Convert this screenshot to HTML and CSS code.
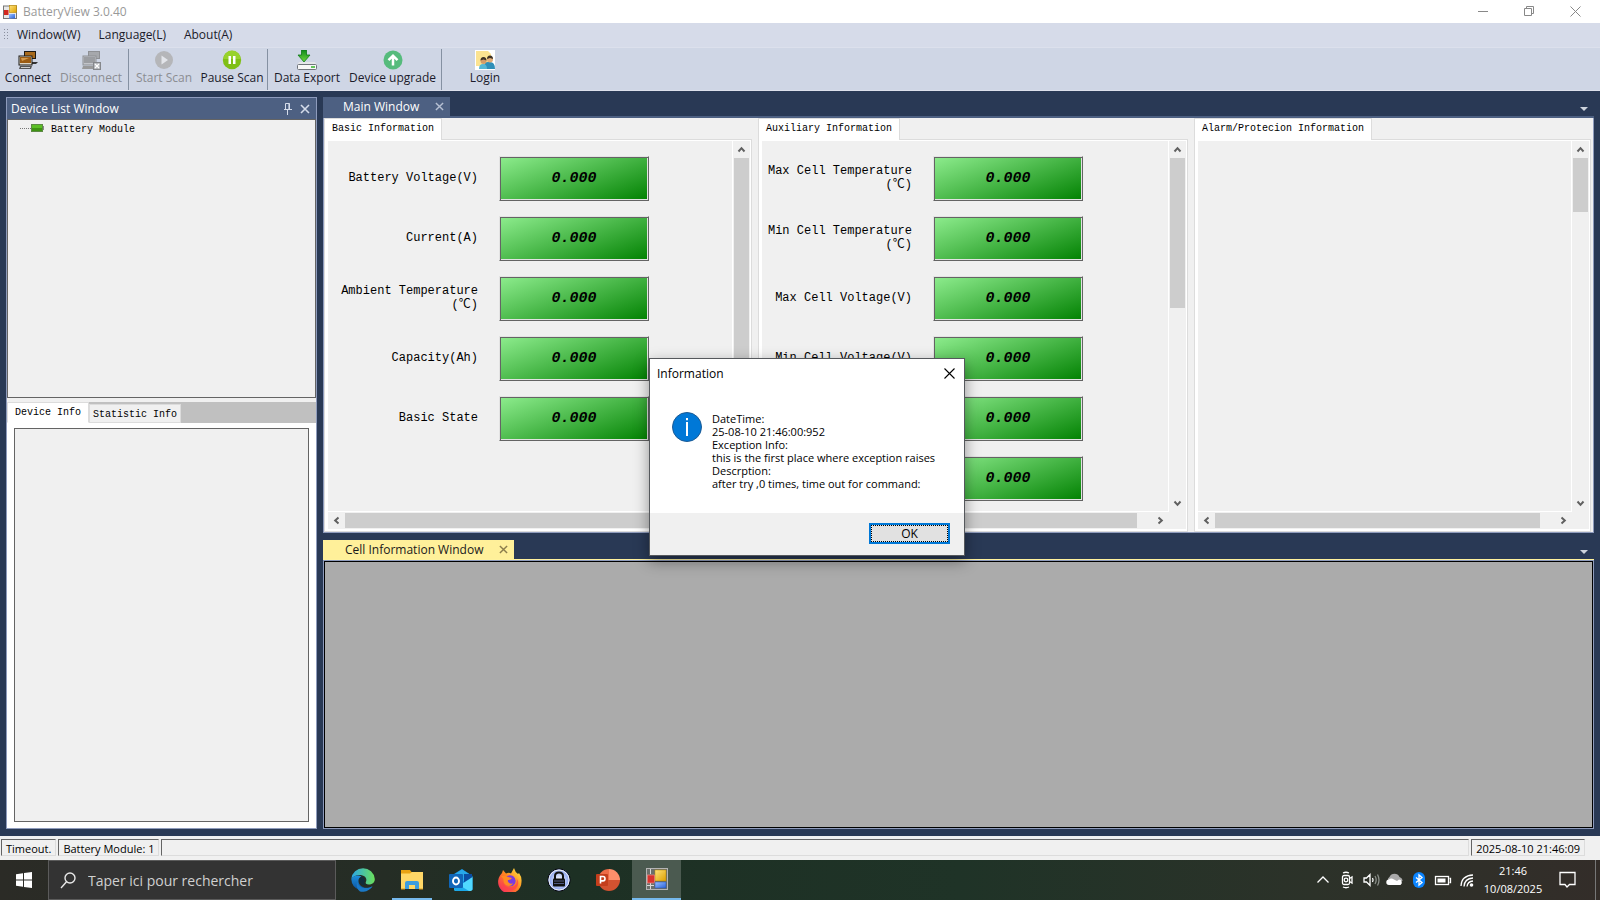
FILE: index.html
```html
<!DOCTYPE html>
<html lang="en">
<head>
  <meta charset="UTF-8" />
  <meta name="viewport" content="width=device-width, initial-scale=1.0" />
  <title>BatteryView 3.0.40</title>
  <link rel="stylesheet" href="styles.css">
</head>
<body>
  <!-- shared icon shapes -->
  <svg width="0" height="0" class="defs" aria-hidden="true">
    <defs>
      <linearGradient id="gYellow" x1="0" y1="0" x2="1" y2="1"><stop offset="0" stop-color="#ffe27a"/><stop offset="1" stop-color="#dda000"/></linearGradient>
      <linearGradient id="gBlue" x1="0" y1="0" x2="1" y2="1"><stop offset="0" stop-color="#9cc0ff"/><stop offset="1" stop-color="#2a62d8"/></linearGradient>
      <linearGradient id="gEdge" x1="0" y1="0" x2="1" y2="0"><stop offset="0" stop-color="#2aa6e8"/><stop offset="1" stop-color="#6be05a"/></linearGradient>
      <linearGradient id="gEdge2" x1="0" y1="0" x2="0" y2="1"><stop offset="0" stop-color="#1c8fdc"/><stop offset="1" stop-color="#0c4f9c"/></linearGradient>
      <linearGradient id="gFox" x1="1" y1="0" x2="0" y2="1"><stop offset="0" stop-color="#fff04a"/><stop offset="0.45" stop-color="#ff8a1e"/><stop offset="1" stop-color="#f5156c"/></linearGradient>
      <radialGradient id="gLock"><stop offset="0" stop-color="#ffffff"/><stop offset="1" stop-color="#7f9bf0"/></radialGradient>
      <linearGradient id="gDown" x1="0" y1="0" x2="0" y2="1"><stop offset="0" stop-color="#0f8a1c"/><stop offset="1" stop-color="#6fd83c"/></linearGradient>
      <symbol id="app" viewBox="0 0 22 22">
        <rect x="0.5" y="0.5" width="21" height="21" fill="#6b6f6b" stroke="#b4b4b4"/>
        <path d="M4.500 14v7M1 17.500h7M4.500 1v5" stroke="#d8d8d8"/>
        <rect x="9" y="2" width="11" height="11" fill="url(#gYellow)" stroke="#b98700" stroke-width=".5"/>
        <rect x="1.500" y="7" width="7" height="8" fill="#d9332e" stroke="#f08a84" stroke-width=".7"/>
        <rect x="9" y="14" width="11" height="6" fill="url(#gBlue)" stroke="#2450a8" stroke-width=".5"/>
      </symbol>
      <symbol id="up" viewBox="0 0 8 7"><path d="M1 5.500L4 2.200L7 5.500" fill="none" stroke="#606060" stroke-width="2"/></symbol>
      <symbol id="cross" viewBox="0 0 10 10"><path d="M1 1l8 8M9 1l-8 8" fill="none" stroke="currentColor" stroke-width="1.600"/></symbol>
    </defs>
  </svg>

  <header class="titlebar">
    <svg class="titlebar-icon" width="14" height="14" viewBox="0 0 14 14">
      <rect x="0.500" y="1" width="13" height="12.500" fill="#e8e8e8" stroke="#777"/>
      <rect x="1" y="5" width="4.500" height="5" fill="#d2271f"/>
      <rect x="6.500" y="0.500" width="7" height="7" fill="url(#gYellow)" stroke="#b98700" stroke-width=".6"/>
      <rect x="6" y="9" width="6" height="4.500" fill="url(#gBlue)"/>
    </svg>
    <h1>BatteryView 3.0.40</h1>
    <div class="window-buttons">
      <button aria-label="Minimize"><svg width="11" height="11"><path d="M0 5.500h10" stroke="#888"/></svg></button>
      <button aria-label="Restore"><svg width="11" height="11" fill="none" stroke="#888"><path d="M.5 2.500h7v7h-7zM2.500 2.500v-2h7v7h-2"/></svg></button>
      <button aria-label="Close"><svg width="11" height="11" stroke="#888"><path d="M.5.5l10 10M10.500.5l-10 10"/></svg></button>
    </div>
  </header>

  <nav class="menubar">
    <span class="grip"></span>
    <button>Window(W)</button>
    <button>Language(L)</button>
    <button>About(A)</button>
  </nav>

  <div class="toolbar">
    <button class="tool tool-connect">
      <svg width="20" height="20" viewBox="0 0 20 20">
        <rect x="6" y="1" width="12" height="8" fill="#1d1a16"/><rect x="7" y="2" width="10" height="6" fill="#a86a1c"/><path d="M14 12h6l-2 2h-4z" fill="#333"/>
        <rect x="1" y="6" width="13" height="9" fill="#ddd6c6" stroke="#1d1a16"/><rect x="2" y="7" width="11" height="6" fill="#9c5c12"/><path d="M3 8h8l-7 3z" fill="#d4994a"/>
        <path d="M2 16h12l-1 3H1z" fill="#555"/><path d="M3 17.500h9" stroke="#ccc"/>
      </svg>
      Connect
    </button>
    <button class="tool tool-disconnect" disabled>
      <svg width="20" height="20" viewBox="0 0 20 20">
        <rect x="7" y="1" width="12" height="8" fill="#8e9094"/><rect x="8" y="2" width="10" height="6" fill="#a6a8ac"/>
        <rect x="2" y="6" width="13" height="9" fill="#c3c5ca" stroke="#8e9094"/><rect x="3" y="7" width="11" height="6" fill="#9b9da1"/>
        <path d="M2 16h12l-1 3H1z" fill="#999"/><rect x="12.500" y="12.500" width="7" height="7" fill="#b4b6ba" stroke="#85878b"/><path d="M14 14l4 4M18 14l-4 4" stroke="#fff" stroke-width="1.300"/>
      </svg>
      Disconnect
    </button>
    <span class="tool-separator"></span>
    <button class="tool tool-scan" disabled>
      <svg width="20" height="20" viewBox="0 0 20 20"><circle cx="10" cy="10" r="9" fill="#b5b6b9"/><path d="M7.500 5.500v9l6.500-4.500z" fill="#e3e5ea"/></svg>
      Start Scan
    </button>
    <button class="tool tool-scan">
      <svg width="20" height="20" viewBox="0 0 20 20"><circle cx="10" cy="10" r="9.200" fill="#7fbf16"/><path d="M1.500 9a8.500 8.500 0 0 1 17 0z" fill="#98d22c"/><path d="M6.500 6h2.500v8H6.500zM11 6h2.500v8H11z" fill="#fff"/></svg>
      Pause Scan
    </button>
    <span class="tool-separator"></span>
    <button class="tool tool-export">
      <svg width="20" height="20" viewBox="0 0 20 20"><path d="M2 12h16l2 3H0z" fill="#e4e6e9"/><rect x="0.500" y="14.500" width="19" height="5" rx="1" fill="#f7f7f7" stroke="#70757c"/><path d="M14 17h4" stroke="#35b52a" stroke-width="1.500"/><path d="M4.500 0h5v5H13l-6 7-6-7h3.500z" fill="url(#gDown)" stroke="#0c7a18" stroke-width=".8"/></svg>
      Data Export
    </button>
    <button class="tool tool-upgrade">
      <svg width="20" height="20" viewBox="0 0 20 20"><circle cx="10" cy="10" r="9.500" fill="#55bb7c"/><path d="M10 15.500V7M5.500 10.200L10 5.700l4.500 4.500" fill="none" stroke="#fff" stroke-width="2.500"/></svg>
      Device upgrade
    </button>
    <span class="tool-separator"></span>
    <button class="tool tool-login">
      <svg width="20" height="20" viewBox="0 0 20 20"><rect width="20" height="20" fill="#fff"/><path d="M1 1h12l3 3v12H1z" fill="#fbe391"/><path d="M9 17q0-5 4-5h2q5 0 5 7H9z" fill="#2f8fb8"/><path d="M4 19q0-5 4-5t4 5z" fill="#55b7d4"/><circle cx="15" cy="9.500" r="3" fill="#e2ae78"/><path d="M12 9q0-3.500 3-3.500T18 9l-3-1z" fill="#3d3226"/><circle cx="8.500" cy="11" r="3" fill="#d49c68"/><path d="M5.500 10.500Q5.500 7 8.500 7t3 3.500l-3-1z" fill="#3d3226"/></svg>
      Login
    </button>
  </div>

  <main class="workspace">
    <aside class="device-window">
      <div class="device-header">
        <h2>Device List Window</h2>
        <button aria-label="Pin"><svg width="8" height="12" fill="none" stroke="#d5dcea"><path d="M1.500 6.500v-6h4v6M4.900.5v6M0 6.500h8M3.500 7v5"/></svg></button>
        <button aria-label="Close"><svg width="10" height="10"><use href="#cross"/></svg></button>
      </div>
      <div class="device-tree">
        <span class="tree-line"></span>
        <svg width="14" height="8"><rect x="0.500" y="0.500" width="11" height="7" fill="#5cbf26" stroke="#5d8a45"/><path d="M1 5.500h10" stroke="#3f9413" stroke-width="3"/><path d="M12.500 2v4" stroke="#888"/></svg>
        <span>Battery Module</span>
      </div>
      <div class="device-tabs">
        <button class="device-tab active">Device Info</button>
        <button class="device-tab">Statistic Info</button>
      </div>
      <div class="device-page"><div class="device-info"></div></div>
    </aside>

    <div class="documents">
      <section class="document main-document">
        <div class="document-tabs">
          <div class="document-tab"><button>Main Window</button><button class="tab-close" aria-label="Close"><svg width="9" height="9" viewBox="0 0 10 10"><use href="#cross"/></svg></button></div>
          <span class="tab-arrow"></span>
        </div>
        <div class="main-content">
          <div class="group group-basic">
            <div class="group-title"><h3>Basic Information</h3></div>
            <div class="group-body">
              <div class="fields">
                <div class="field"><label for="voltage">Battery Voltage(V)</label><input id="voltage" value="0.000" readonly></div>
                <div class="field"><label for="current">Current(A)</label><input id="current" value="0.000" readonly></div>
                <div class="field"><label for="ambient">Ambient Temperature<br>(℃)</label><input id="ambient" value="0.000" readonly></div>
                <div class="field"><label for="capacity">Capacity(Ah)</label><input id="capacity" value="0.000" readonly></div>
                <div class="field"><label for="state">Basic State</label><input id="state" value="0.000" readonly></div>
              </div>
              <div class="vscroll"><svg class="arrow"><use href="#up"/></svg><span class="thumb thumb-long"></span><svg class="arrow down"><use href="#up"/></svg></div>
              <div class="hscroll"><svg class="arrow left"><use href="#up"/></svg><span class="thumb"></span><svg class="arrow right"><use href="#up"/></svg></div>
            </div>
          </div>
          <div class="group group-auxiliary">
            <div class="group-title"><h3>Auxiliary Information</h3></div>
            <div class="group-body">
              <div class="fields">
                <div class="field"><label for="maxtemp">Max Cell Temperature<br>(℃)</label><input id="maxtemp" value="0.000" readonly></div>
                <div class="field"><label for="mintemp">Min Cell Temperature<br>(℃)</label><input id="mintemp" value="0.000" readonly></div>
                <div class="field"><label for="maxvolt">Max Cell Voltage(V)</label><input id="maxvolt" value="0.000" readonly></div>
                <div class="field"><label for="minvolt">Min Cell Voltage(V)</label><input id="minvolt" value="0.000" readonly></div>
                <div class="field"><label></label><input aria-label="Value" value="0.000" readonly></div>
                <div class="field"><label></label><input aria-label="Value" value="0.000" readonly></div>
              </div>
              <div class="vscroll"><svg class="arrow"><use href="#up"/></svg><span class="thumb thumb-medium"></span><svg class="arrow down"><use href="#up"/></svg></div>
              <div class="hscroll"><svg class="arrow left"><use href="#up"/></svg><span class="thumb"></span><svg class="arrow right"><use href="#up"/></svg></div>
            </div>
          </div>
          <div class="group group-alarm">
            <div class="group-title"><h3>Alarm/Protecion Information</h3></div>
            <div class="group-body">
              <div class="fields"></div>
              <div class="vscroll"><svg class="arrow"><use href="#up"/></svg><span class="thumb thumb-short"></span><svg class="arrow down"><use href="#up"/></svg></div>
              <div class="hscroll"><svg class="arrow left"><use href="#up"/></svg><span class="thumb"></span><svg class="arrow right"><use href="#up"/></svg></div>
            </div>
          </div>
        </div>
      </section>

      <section class="document cell-document">
        <div class="document-tabs">
          <div class="document-tab"><button>Cell Information Window</button><button class="tab-close" aria-label="Close"><svg width="9" height="9" viewBox="0 0 10 10"><use href="#cross"/></svg></button></div>
          <span class="tab-arrow"></span>
        </div>
        <div class="cell-content"></div>
      </section>
    </div>
  </main>

  <footer class="statusbar">
    <span>Timeout.</span>
    <span>Battery Module: 1</span>
    <span class="status-fill"></span>
    <span>2025-08-10 21:46:09</span>
  </footer>

  <div class="taskbar">
    <button class="start" aria-label="Start"><svg width="16" height="16" fill="#fff"><path d="M0 2.200l7-1v6.300H0zM8 1.100L16 0v7.500H8zM0 8.500h7v6.300l-7-1zM8 8.500h8V16l-8-1.100z"/></svg></button>
    <label class="search">
      <svg width="16" height="17" fill="none" stroke="#e8e8e8" stroke-width="1.400"><circle cx="10" cy="6" r="5"/><path d="M6.500 9.800L1 16"/></svg>
      <input type="text" placeholder="Taper ici pour rechercher" aria-label="Search">
    </label>
    <button class="task" aria-label="Edge">
      <svg width="24" height="24" viewBox="0 0 24 24"><path d="M.3 11A11.800 11.800 0 0 1 23.800 11c0 4-3 5.500-6 5.500-2.600 0-3.600-1-3-2.200 1.600-3 0-6.300-4-7C6 6.500 1.800 8.500.3 11z" fill="url(#gEdge)"/><path d="M.3 11C2 7.500 7 6.500 10.500 8.500 7 9.500 6.500 14 9 17c3 3.500 8.500 3.500 12.500 1.200A12 12 0 0 1 .3 11z" fill="url(#gEdge2)"/><path d="M6.200 13c.8 7 8.500 9 15.300 5.200C18 23.500 12 24.500 9 23.400 5.500 21 5 17 6.200 13z" fill="#1b79c6"/><path d="M10.300 8.500c2.700.6 3.700 2.500 3.600 4.500l-.8 1.500c-.4 1.300.8 2.200 3 2.500-3.500 1-6.600-.5-7.400-3-.6-2 .2-4.500 1.600-5.500z" fill="#122c3c"/></svg>
    </button>
    <button class="task open" aria-label="File Explorer">
      <svg width="22" height="20" viewBox="0 0 22 20"><path d="M0 0h9l1.500 2H22v17H0z" fill="#e9a213"/><path d="M0 3.500h9L11 2h11v17H0z" fill="#ffd767"/><path d="M4 19v-6q0-2 2-2h10q2 0 2 2v6h-4v-4H8v4z" fill="#3c9de0"/><path d="M0 19h4M18 19h4" stroke="#d99c1c"/></svg>
    </button>
    <button class="task" aria-label="Outlook">
      <svg width="24" height="22" viewBox="0 0 24 22"><path d="M5 5l8-5 10.500 7v14H5z" fill="#1390df"/><path d="M6 5l7-4.500L20 5v7H6z" fill="#28a8ea"/><path d="M15 5h8v6l-8 4z" fill="#0a4da3"/><path d="M5 20l18.500-12v12q0 2-2 2H7q-2 0-2-2z" fill="#50d9ff"/><path d="M5 13l15 9H7q-2 0-2-2z" fill="#1ba9e9"/><rect y="5" width="14" height="14" rx="1" fill="#1066b8"/><ellipse cx="7" cy="12" rx="3" ry="3.500" fill="none" stroke="#fff" stroke-width="1.900"/></svg>
    </button>
    <button class="task" aria-label="Firefox">
      <svg width="24" height="24" viewBox="0 0 24 24"><path d="M4 5l1-3 3 3.500q3-1.500 5 0L16 0q1 4 4 6l1-1q3 4 2.500 9A11.700 11.700 0 1 1 2 7.500z" fill="url(#gFox)"/><path d="M8 9q3-3 7-1 4 3 2 7.500-2 3.500-6 2.500-5-1.500-4.500-6z" fill="#7a3be0"/><path d="M3 8q4-1 7 1l4 1q-1 2-4 2-1 2 2 3.500 2 .5 3-.5-1 3-4.500 3Q5 17 5.500 11z" fill="#ff8b20"/><path d="M4 14q3 7 10 5 6-2 4.500-9 4 6-1 11-7 4-12-2z" fill="#ff3b52" opacity=".7"/></svg>
    </button>
    <button class="task" aria-label="Password vault">
      <svg width="24" height="24" viewBox="0 0 24 24"><circle cx="12" cy="12" r="11.200" fill="url(#gLock)" stroke="#050505" stroke-width="1"/><circle cx="12" cy="12" r="10" fill="none" stroke="#eee"/><path d="M8 11V8q0-3.500 4-3.500T16 8v3" fill="none" stroke="#111" stroke-width="2"/><rect x="6" y="10.500" width="12" height="8" rx="1" fill="#111"/><path d="M7 13h10M7 15.500h10" stroke="#5d6b9c" stroke-width=".8"/></svg>
    </button>
    <button class="task" aria-label="PowerPoint">
      <svg width="24" height="22" viewBox="0 0 24 22"><path d="M13 0v11H24A11 11 0 0 0 13 0z" fill="#ff8f6b"/><path d="M13 0A11 11 0 0 0 2 11h11z" fill="#ed6c47"/><path d="M2 11h22a11 11 0 0 1-22 0z" fill="#d35230"/><rect y="5" width="12" height="12" rx="1" fill="#c43e1c"/><path d="M4.500 14.500v-7H7q2 0 2 2.200t-2 2.200H4.500" fill="none" stroke="#fff" stroke-width="1.600"/></svg>
    </button>
    <button class="task current" aria-label="BatteryView"><svg width="22" height="22"><use href="#app"/></svg></button>

    <div class="tray">
      <svg width="24" height="24" viewBox="0 0 24 24"><path d="M6.500 14.500l5.500-5.500 5.500 5.500"/></svg>
      <svg width="24" height="24" viewBox="0 0 24 24"><rect x="7.500" y="7.500" width="7" height="9" rx="1.500"/><circle cx="11" cy="12" r="1.800"/><path d="M14.500 10.500l2.500-1.500v6l-2.500-1.500M8 5q3-1.500 6 0M8 19q3 1.500 6 0"/></svg>
      <svg width="24" height="24" viewBox="0 0 24 24"><path d="M5 10h2.500l3.500-3.500v11L7.500 14H5zM13.500 10q1.200 2 0 4"/><path d="M16 8q2.400 4 0 8M18.500 6.500q3 5.500 0 11" stroke="#8b908a"/></svg>
      <svg width="24" height="24" viewBox="0 0 24 24"><path d="M6.500 15a3.500 3.500 0 0 1 0-6 5.500 5.500 0 0 1 10 0q3 1 3 4z" fill="#aaa" stroke="none"/><path d="M6 17a2.700 2.700 0 0 1 0-5.400q2-2 5 0l3 1.400 2-1.500a3 3 0 0 1 1.500 5.500z" fill="#fff" stroke="none"/></svg>
      <svg width="24" height="24" viewBox="0 0 24 24"><rect x="6" y="4" width="12" height="16" rx="6" fill="#0a84ff" stroke="none"/><path d="M9 9.500l6 5-3 2.500V7l3 2.500-6 5"/></svg>
      <svg width="24" height="24" viewBox="0 0 24 24"><rect x="4.500" y="8.500" width="13" height="8"/><path d="M18.500 10.500h1v4h-1"/><rect x="6.500" y="10.500" width="8" height="4" fill="#fff" stroke="none"/></svg>
      <svg width="24" height="24" viewBox="0 0 24 24"><path d="M6 18Q6.500 7.500 18 7M9 18.500q.5-8 9-8.500M12 18.500q.5-5 6-5.500"/><circle cx="16.500" cy="17" r="1.800" fill="#fff" stroke="none"/></svg>
      <div class="clock"><span>21:46</span><span>10/08/2025</span></div>
      <svg class="notifications" width="18" height="18" viewBox="0 0 18 18"><path d="M1 1.500h15v12h-5.500L8 16l-2-2.500H1z"/></svg>
    </div>
  </div>

  <div class="dialog" role="dialog" aria-labelledby="dialog-title">
    <div class="dialog-header">
      <h2 id="dialog-title">Information</h2>
      <button aria-label="Close"><svg width="11" height="11" stroke="#000" stroke-width="1.100"><path d="M.5.5l10 10M10.500.5l-10 10"/></svg></button>
    </div>
    <div class="dialog-body">
      <svg width="30" height="30"><circle cx="15" cy="15" r="14.500" fill="#0078d7" stroke="#1b5a94"/><path d="M15 10v14M15 6v2.200" stroke="#fff" stroke-width="2"/></svg>
      <p>DateTime:<br>25-08-10 21:46:00:952<br>Exception Info:<br>this is the first place where exception raises<br>Descrption:<br>after try ,0 times, time out for command:</p>
    </div>
    <div class="dialog-footer"><button class="ok"><span>OK</span></button></div>
  </div>
</body>
</html>
```

FILE: styles.css
```css
* { box-sizing: border-box; }
body {
  margin: 0;
  height: 100vh;
  display: flex;
  flex-direction: column;
  overflow: hidden;
  background: #293955;
  font-family: "Open Sans", "Noto Sans", sans-serif;
  font-size: 12px;
  color: #1b1b2b;
}
h1, h2, h3, p { margin: 0; font-size: inherit; font-weight: normal; }
button {
  border: 0;
  padding: 0;
  background: none;
  font: inherit;
  color: inherit;
  white-space: nowrap;
}
svg { display: block; flex-shrink: 0; }
.defs { position: absolute; }

/* title, menu and toolbar */
.titlebar {
  display: flex;
  align-items: center;
  height: 23px;
  flex-shrink: 0;
  padding-left: 3px;
  background: #fff;
  color: #999;
}
.titlebar-icon { margin-right: 6px; }
.window-buttons { margin-left: auto; display: flex; height: 20px; }
.window-buttons button { width: 46px; display: flex; align-items: center; justify-content: center; }
.window-buttons button:last-child { margin-right: 2px; }
.menubar {
  display: flex;
  align-items: center;
  gap: 18px;
  height: 24px;
  flex-shrink: 0;
  padding: 0 0 1px 3px;
  background: #d6dbe9;
}
.grip {
  width: 5px;
  height: 13px;
  margin-right: -9px;
  background: radial-gradient(circle, #8a8f9e 1px, transparent 1px) 0 0 / 3px 3px;
}
.toolbar {
  display: flex;
  height: 44px;
  flex-shrink: 0;
  padding-left: 1px;
  background: #cfd6e5;
  border-top: 1px solid #dce0ec;
  border-bottom: 1px solid #dce0ec;
}
.tool { display: flex; flex-direction: column; align-items: center; justify-content: flex-start; padding-top: 2px; line-height: 16px; }
.tool:disabled { color: #8b8d92; }
.tool-connect { width: 54px; }
.tool-disconnect { width: 72px; }
.tool-scan { width: 68px; }
.tool-export { width: 76px; }
.tool-upgrade { width: 95px; }
.tool-login { width: 84px; }
.tool-separator { width: 1px; margin: 1px 1px 0; background: #8591a2; }

/* docking area */
.workspace { flex: 1; min-height: 0; display: flex; gap: 6px; padding: 6px 6px 7px; }
.device-window {
  width: 311px;
  flex-shrink: 0;
  display: flex;
  flex-direction: column;
  background: #f0f0f0;
  border: 1px solid #8e9bbc;
}
.device-header {
  display: flex;
  align-items: center;
  gap: 8px;
  height: 21px;
  flex-shrink: 0;
  padding: 0 6px 0 4px;
  background: #4d6082;
  color: #fff;
}
.device-header h2 { margin-right: auto; }
.device-header button { color: #d5dcea; }
.device-tree {
  flex: 280 0 0;
  display: flex;
  align-items: flex-start;
  padding: 4px 0 0 12px;
  border: 1px solid #646464;
  font-family: "Liberation Mono", monospace;
  font-size: 10px;
  line-height: 11px;
  color: #000;
}
.device-tree svg { margin-right: 6px; }
.tree-line { width: 11px; margin-top: 4px; border-top: 1px dotted #777; }
.device-tabs { display: flex; align-items: flex-end; height: 21px; flex-shrink: 0; margin-top: 4px; background: #c0c0c0; }
.device-tab {
  height: 19px;
  padding: 2px 3px 0;
  background: #f0f0f0;
  border: 1px solid #dcdcdc;
  font-family: "Liberation Mono", monospace;
  font-size: 10px;
  color: #000;
}
.device-tab.active { height: 21px; padding: 0 7px; background: #fff; border-bottom-color: #fff; }
.device-page { flex: 405 0 0; padding: 5px 7px 6px; background: #fff; }
.device-info { height: 100%; border: 1px solid #646464; background: #f0f0f0; }

.documents { flex: 1; min-width: 0; display: flex; flex-direction: column; gap: 7px; }
.document { display: flex; flex-direction: column; min-height: 0; }
.main-document { flex: 436 0 0; }
.cell-document { flex: 289 0 0; }
.document-tabs { display: flex; flex-shrink: 0; align-items: stretch; height: 21px; border-bottom: 2px solid #4d6082; }
.document-tab {
  display: flex;
  align-items: center;
  gap: 16px;
  padding: 0 6px 0 20px;
  background: #4d6082;
  color: #fff;
}
.tab-close { color: #b6c0d3; }
.tab-arrow {
  align-self: flex-end;
  margin: 0 6px 5px auto;
  border: 4px solid transparent;
  border-top-color: #ced4dd;
  border-bottom: 0;
}
.cell-document .document-tabs { border-color: #fff29d; }
.cell-document .document-tab { background: #fff09a; color: #1a1a1a; padding-left: 22px; }
.cell-document .tab-close { color: #8b7d4c; }
.cell-content { flex: 1; background: #ababab; border: 1px solid #000; outline: 1px solid #8e9bbc; margin: 0 1px 1px; }
.main-content {
  flex: 1;
  min-height: 0;
  display: flex;
  gap: 6px;
  padding-right: 2px;
  background: #f0f0f0;
  border: 1px solid #8e9bbc;
  border-top: 0;
}

.group { min-width: 0; display: flex; flex-direction: column; }
.group-basic { flex: 428 1 0; }
.group-auxiliary { flex: 430 1 0; }
.group-alarm { flex: 397 1 0; }
.group-title { display: flex; height: 21px; flex-shrink: 0; }
.group-title h3 {
  height: 22px;
  padding: 0 7px;
  position: relative;
  background: #fff;
  border: 1px solid #dcdcdc;
  border-bottom: 0;
  font-family: "Liberation Mono", monospace;
  font-size: 10px;
  line-height: 20px;
  color: #000;
  white-space: nowrap;
}
.group-body {
  flex: 1;
  min-height: 0;
  display: grid;
  grid-template-columns: minmax(0, 1fr) 17px;
  grid-template-rows: minmax(0, 1fr) 17px;
  padding: 1px 1px 2px 3px;
  background: linear-gradient(#f0f0f0, #f0f0f0) content-box, #fff;
  border: 1px solid #dcdcdc;
}
.fields { grid-area: 1 / 1; padding-top: 7px; overflow: hidden; border-right: 1px solid #fff; border-bottom: 1px solid #fff; }
.field { display: flex; align-items: center; gap: 21px; height: 60px; }
.field label {
  width: 150px;
  flex-shrink: 0;
  text-align: right;
  font-family: "Liberation Mono", "Noto Sans CJK SC", monospace;
  font-size: 12px;
  line-height: 14px;
  color: #000;
  white-space: nowrap;
}
.field input {
  width: 150px;
  height: 45px;
  padding: 0;
  text-align: center;
  font: italic bold 15px "Liberation Mono", monospace;
  color: #000;
  background: linear-gradient(160deg, #90ee90 0%, #008000 100%) border-box;
  border: 1px solid #646464;
  border-color: #e3e3e3 #646464 #646464 #e3e3e3;
  box-shadow: inset 1px 1px #646464, inset -1px -1px #e3e3e3;
  outline: 0;
}
.vscroll { grid-area: 1 / 2; display: flex; flex-direction: column; }
.hscroll { grid-area: 2 / 1; display: flex; }
.arrow { width: 9px; height: 7px; margin: 5px 4px; }
.down { transform: rotate(180deg); margin-top: auto; }
.left { transform: rotate(-90deg); }
.right { transform: rotate(90deg); margin-left: auto; }
.thumb { background: #cdcdcd; }
.vscroll .thumb { width: 15px; margin-left: 1px; }
.hscroll .thumb { height: 15px; width: calc(100% - 49px); margin-top: 1px; }
.thumb-long { height: 250px; }
.thumb-medium { height: 150px; }
.thumb-short { height: 54px; }

/* status bar */
.statusbar {
  display: flex;
  gap: 2px;
  height: 24px;
  flex-shrink: 0;
  padding: 3px 15px 4px 1px;
  background: #f0f0f0;
  color: #000;
  font-size: 11px;
}
.statusbar span {
  padding: 0 4px;
  line-height: 17px;
  border: 1px solid #dcdcdc;
  border-top-color: #646464;
  border-left-color: #646464;
}
.statusbar .status-fill { flex: 1; }

/* windows taskbar */
.taskbar {
  display: flex;
  height: 40px;
  flex-shrink: 0;
  background: linear-gradient(90deg, #2b2b26 0%, #252d25 24%, #1d3024 36%, #1f3327 60%, #2c3229 82%, #332d29 100%);
  color: #fff;
}
.start { width: 48px; display: flex; align-items: center; justify-content: center; }
.search {
  width: 288px;
  display: flex;
  align-items: center;
  gap: 12px;
  padding: 0 0 0 11px;
  margin-right: 2px;
  background: #333;
  border: 1px solid #5b5b5b;
}
.search input { flex: 1; min-width: 0; padding: 0; border: 0; outline: 0; background: none; font: 14px "Open Sans", sans-serif; color: #fff; }
.search input::placeholder { color: #d0d0d0; opacity: 1; }
.task { width: 49px; display: flex; align-items: center; justify-content: center; }
.task.open { background: linear-gradient(#76b9ed, #76b9ed) center bottom / 40px 2px no-repeat; }
.task.current { background: #4b5a50; border-bottom: 2px solid #76b9ed; }
.tray { margin-left: auto; display: flex; align-items: center; padding-right: 18px; margin-right: 4px; border-right: 1px solid #777; }
.tray svg { fill: none; stroke: #fff; stroke-width: 1.3; }
.clock { display: flex; flex-direction: column; width: 68px; text-align: center; font-size: 11px; line-height: 18px; }
.notifications { margin-left: 12px; }

/* message box */
.dialog {
  position: absolute;
  left: 50%;
  top: 50%;
  width: 316px;
  transform: translate(-151px, -92px);
  background: #fff;
  border: 1px solid #55585c;
  box-shadow: 0 5px 14px rgba(0, 0, 0, .4);
  color: #000;
}
.dialog-header { display: flex; align-items: center; justify-content: space-between; height: 29px; padding: 0 9px 0 7px; }
.dialog-body { display: flex; gap: 10px; height: 125px; padding: 24px 22px 0; font-size: 11px; line-height: 13px; white-space: nowrap; }
.dialog-footer { display: flex; justify-content: flex-end; padding: 10px 14px 11px; background: #f0f0f0; }
.ok { width: 81px; height: 21px; padding: 0; background: #e1e1e1; border: 2px solid #0078d7; line-height: 15px; }
.ok span { display: block; border: 1px dotted #000; }
```
